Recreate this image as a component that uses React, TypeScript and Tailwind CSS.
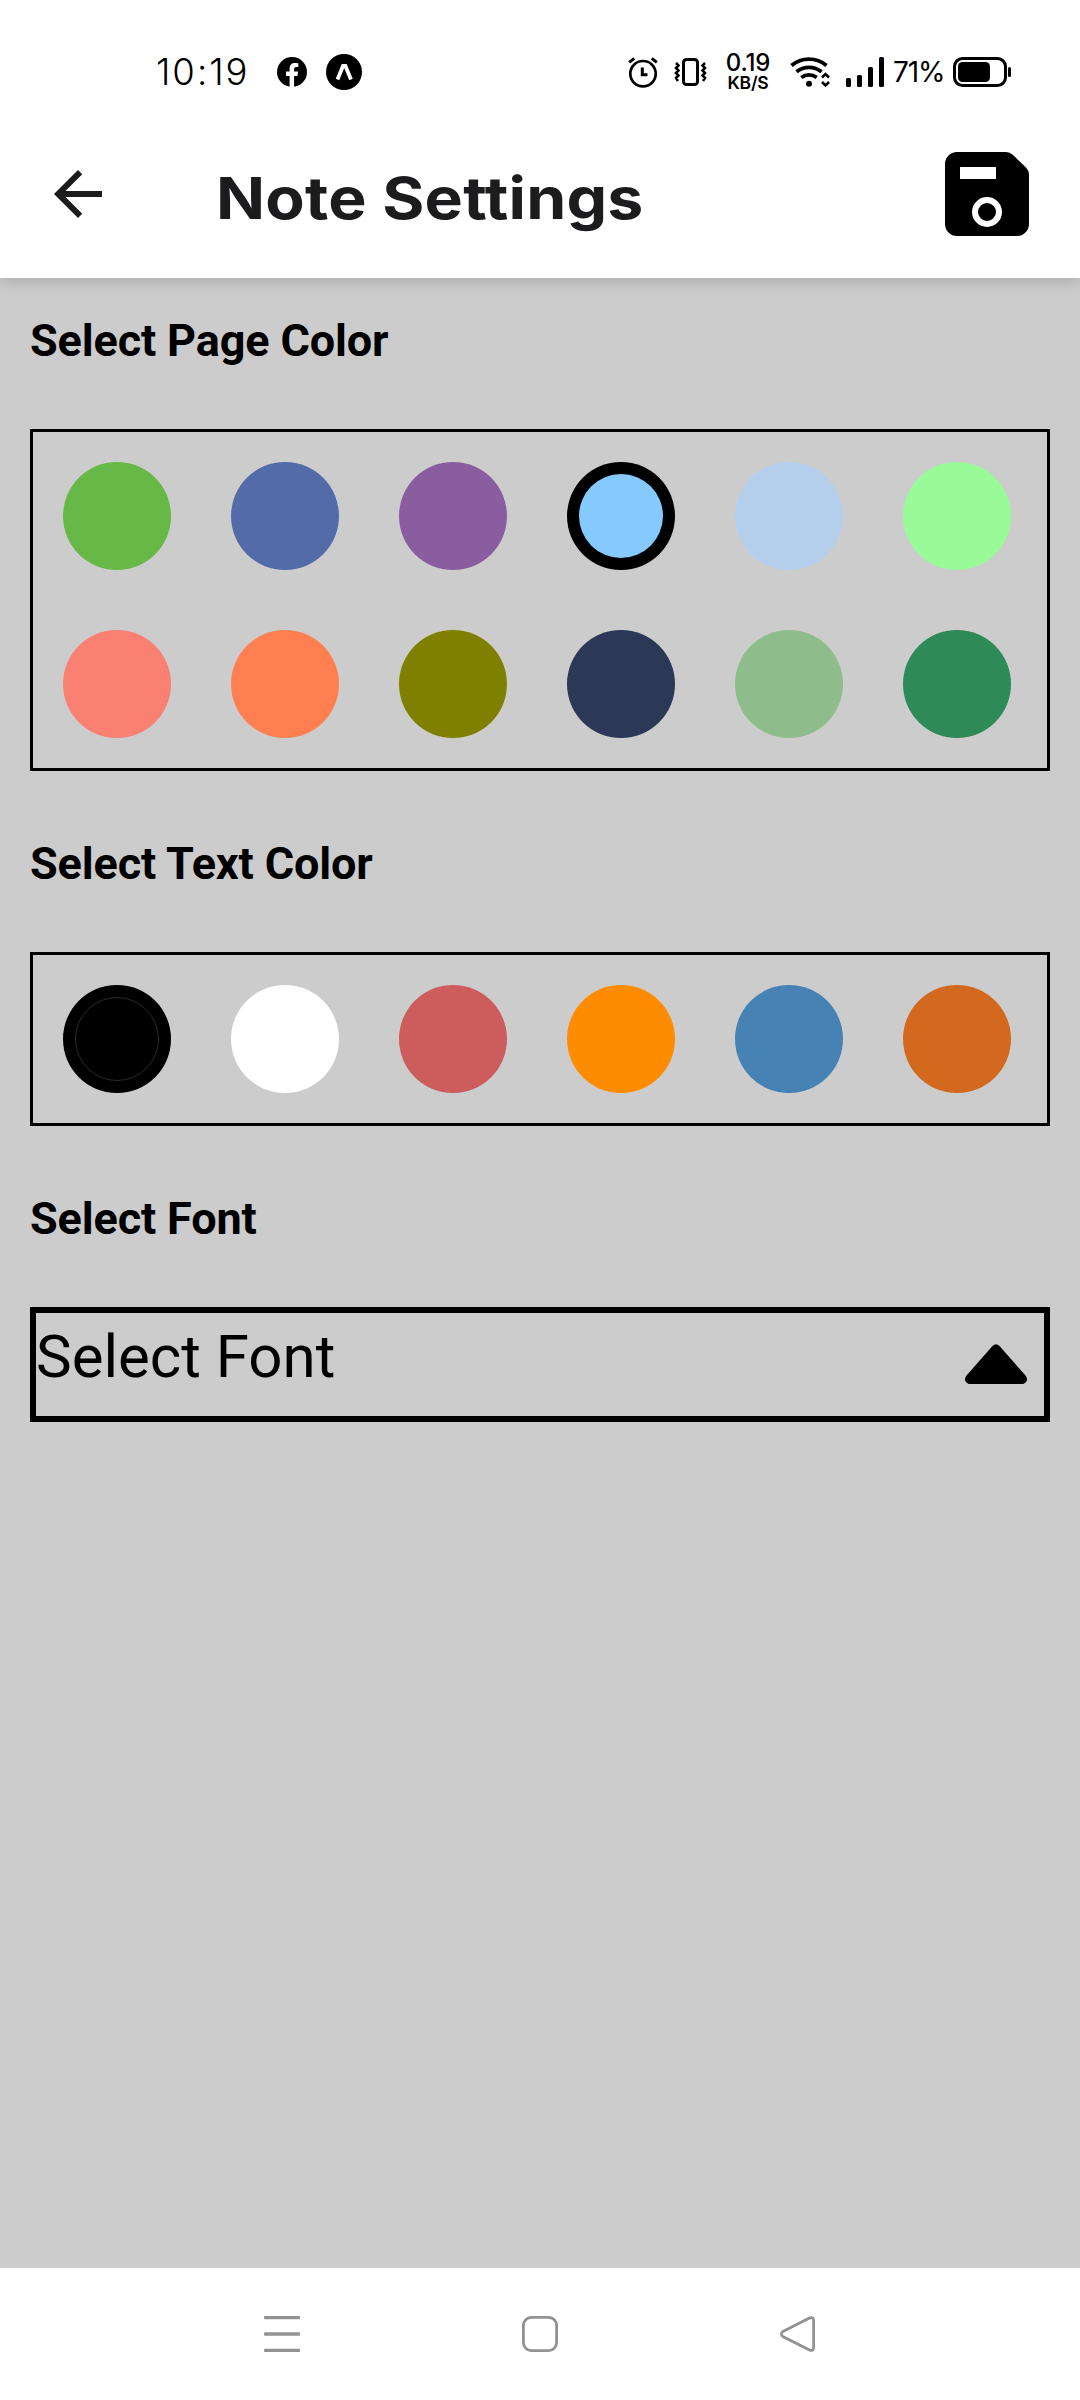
import React from "react";

const pageColors = [
  "#66b947", "#536ca9", "#895d9f", "#84caff", "#b4cfeb", "#98fb98",
  "#fa8072", "#ff7f50", "#808000", "#2b3856", "#8fbc8b", "#2e8b57",
];
const textColors = ["#000000", "#ffffff", "#cd5c5c", "#ff8c00", "#4682b4", "#d2691e"];

function Swatches({ colors, selected }: { colors: string[]; selected: string }) {
  return (
    <div className="flex flex-wrap border-[3px] border-black">
      {colors.map((color) => (
        <button
          key={color}
          aria-label={color}
          className="m-[30px] flex size-[108px] items-center justify-center rounded-full"
          style={{ backgroundColor: color === selected ? "#000000" : color }}
        >
          {color === selected && (
            <span
              className={
                color === "#000000"
                  ? "size-[84px] rounded-full border border-[#2a2a2a]"
                  : "size-[84px] rounded-full"
              }
              style={{ backgroundColor: color }}
            />
          )}
        </button>
      ))}
    </div>
  );
}

function Label({ children }: { children: React.ReactNode }) {
  return (
    <h2 className="mb-[58px] h-[60px] text-[45px] leading-[60px] font-bold tracking-[-0.14px] whitespace-nowrap">
      {children}
    </h2>
  );
}

function StatusBar() {
  return (
    <div className="flex h-[144px] items-center pr-[68px] pl-[156px] font-[Inter,sans-serif] text-black">
      <span className="w-[121px] text-[36.5px] leading-[44px] font-light tracking-[2px] whitespace-nowrap">
        10:19
      </span>
      <svg className="h-[30px] w-[30px]" viewBox="0 0 30 30">
        <circle cx="15" cy="15" r="15" />
        <path
          d="M12.6 30V18.9H9V14.6h3.6v-3.1c0-3.6 2.2-5.6 5.5-5.6 1.6 0 3.2.3 3.2.3v3.700h-1.900c-1.800 0-2.300 1.100-2.300 2.200v2.500h4l-.65 4.300h-3.350V30z"
          fill="#fff"
        />
      </svg>
      <svg className="ml-[19px] h-[36px] w-[36px]" viewBox="0 0 36 36">
        <circle cx="18" cy="18" r="18" />
        <path d="M11.500 25.500 17 12h2.400l5.600 13.500" fill="none" stroke="#fff" strokeWidth="3.800" />
      </svg>
      <div className="ml-auto flex items-center">
        <svg className="h-[32px] w-[30px]" viewBox="0 0 30 32" fill="none" stroke="#000">
          <circle cx="15" cy="17.700" r="12.700" strokeWidth="2.700" />
          <path d="M1.200 6.300 6.200 2.300M28.800 6.300 23.800 2.300M14.300 11.500v7.200h5.200" strokeWidth="3" />
        </svg>
        <svg className="ml-[16px] h-[32px] w-[33px]" viewBox="0 0 33 32" fill="none" stroke="#000">
          <rect x="9.500" y="3.500" width="14" height="25" rx="3" strokeWidth="3" />
          <path
            d="M2 7l2.500 2.500L2 12l2.500 2.500L2 17l2.500 2.500L2 22l2 3M31 7l-2.500 2.500L31 12l-2.500 2.500L31 17l-2.500 2.500L31 22l-2 3"
            strokeWidth="2.500"
          />
        </svg>
        <p className="ml-[18px] w-[46px] text-center text-[24px] leading-[22px] font-medium tracking-[-0.2px] whitespace-nowrap">
          0.19
          <small className="block text-[17.5px] leading-[18px] font-semibold tracking-[-0.2px]">KB/S</small>
        </p>
        <svg className="ml-[19px] h-[32px] w-[40px]" viewBox="0 0 40 32" fill="none" stroke="#000">
          <path d="M1.500 9.500a27 27 0 0 1 35 0" strokeWidth="3.800" />
          <path d="M6.500 15.800a20 20 0 0 1 25 0" strokeWidth="3.800" />
          <path d="M11.300 21.500a13 13 0 0 1 15.400 0" strokeWidth="3.800" />
          <circle cx="19" cy="27.800" r="3" fill="#000" stroke="none" />
          <path d="M31 16.500h9v15h-9z" fill="#fff" stroke="none" />
          <path d="M32 21.500l3.500-3.500 3.500 3.500M32 26l3.500 3.500L39 26" strokeWidth="2.600" />
        </svg>
        <svg className="ml-[15px] h-[32px] w-[40px]" viewBox="0 0 40 32">
          <rect x="1" y="22" width="5" height="9" rx="1.500" />
          <rect x="12" y="19" width="5" height="12" rx="1.500" />
          <rect x="23" y="11" width="5" height="20" rx="1.500" />
          <rect x="34" y="1" width="5" height="30" rx="1.500" />
        </svg>
        <span className="ml-[8px] w-[52px] text-[28px] leading-[32px] tracking-[-1.1px] whitespace-nowrap">
          71%
        </span>
        <svg className="ml-[7px] h-[32px] w-[60px]" viewBox="0 0 60 32">
          <rect x="2.500" y="2.500" width="51" height="27" rx="8" fill="none" stroke="#000" strokeWidth="3" />
          <rect x="6" y="6" width="32" height="20" rx="4.500" />
          <rect x="56" y="11" width="3" height="10" rx="1.500" />
        </svg>
      </div>
    </div>
  );
}

export default function App() {
  return (
    <div className="flex h-[2400px] w-[1080px] flex-col bg-[#cccccc] font-[Roboto,sans-serif] text-black">
      <header className="h-[278px] bg-white shadow-[0_3px_14px_rgba(0,0,0,0.17)]">
        <StatusBar />
        <div className="flex h-[100px] items-center pr-[51px] pl-[42px]">
          <svg className="h-[72px] w-[72px]" viewBox="0 0 24 24" fill="#1c1c1e">
            <path d="M20 11H7.830l5.590-5.590L12 4l-8 8 8 8 1.410-1.410L7.830 13H20v-2z" />
          </svg>
          <h1 className="ml-[102px] origin-left scale-x-[1.11] pt-[7px] font-[Inter,sans-serif] text-[58px] leading-[72px] font-bold tracking-[0.2px] whitespace-nowrap text-[#1c1c1e]">
            Note Settings
          </h1>
          <svg className="ml-auto h-[84px] w-[84px]" viewBox="0 0 84 84">
            <path d="M12 0h49q4 0 7 3l13 12.500q3 3 3 7V72a12 12 0 0 1-12 12H12A12 12 0 0 1 0 72V12A12 12 0 0 1 12 0z" />
            <rect x="15" y="15" width="36" height="12" rx="0.600" fill="#fff" />
            <circle cx="42" cy="60" r="12" fill="none" stroke="#fff" strokeWidth="6" />
          </svg>
        </div>
      </header>

      <main className="flex flex-1 flex-col gap-[63px] px-[30px] pt-[33px]">
        <section>
          <Label>Select Page Color</Label>
          <Swatches colors={pageColors} selected="#84caff" />
        </section>
        <section>
          <Label>Select Text Color</Label>
          <Swatches colors={textColors} selected="#000000" />
        </section>
        <section>
          <Label>Select Font</Label>
          <div className="flex h-[115px] items-start justify-between border-[6px] border-black pt-[9px] pr-[17px]">
            <span className="text-[60px] leading-[70px] whitespace-nowrap">Select Font</span>
            <svg className="mt-[22px] h-[40px] w-[62px]" viewBox="0 0 62 40">
              <path d="M27.500 2Q31 -1.500 34.500 2L60.500 31.500Q63.500 36 60.500 38.500Q59 40 57 40H5Q3 40 1.500 38.500Q-1.500 36 1.500 31.500Z" />
            </svg>
          </div>
        </section>
      </main>

      <nav className="flex h-[132px] items-center justify-between bg-white px-[264px]">
        <svg className="h-[36px] w-[36px]" viewBox="0 0 36 36" fill="#929292">
          <rect y="0" width="36" height="3.300" rx="1" />
          <rect y="16.200" width="36" height="3.600" rx="1" />
          <rect y="32.700" width="36" height="3.300" rx="1" />
        </svg>
        <svg className="h-[36px] w-[36px]" viewBox="0 0 36 36" fill="none" stroke="#929292" strokeWidth="2.800">
          <rect x="1.400" y="1.400" width="33.200" height="33.200" rx="8" />
        </svg>
        <svg className="h-[36px] w-[36px]" viewBox="0 0 36 36" fill="none" stroke="#929292" strokeWidth="2.800">
          <path d="M2.800 15.500 29 2.300Q33.600 0 33.600 4.500V31.500Q33.600 36 29 33.700L2.800 20.500Q0 18 2.800 15.500Z" />
        </svg>
      </nav>
    </div>
  );
}
